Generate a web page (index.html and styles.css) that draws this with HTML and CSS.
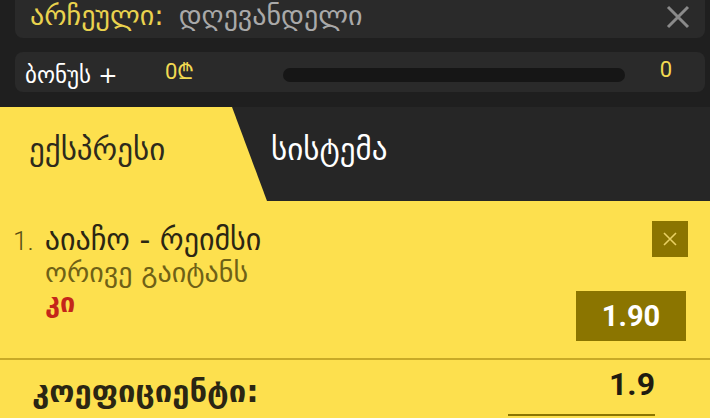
FILE: index.html
```html
<!DOCTYPE html>
<html>
<head>
<meta charset="utf-8">
<link rel="stylesheet" href="styles.css">
</head>
<body>
<div class="top">
  <div class="bar bar-sel">
    <span class="sel-label">არჩეული:</span>
    <span class="sel-value">დღევანდელი</span>
    <svg class="close" width="24" height="24" viewBox="0 0 24 24"><path d="M2 2 L22 22 M22 2 L2 22" stroke="#8a8a8a" stroke-width="3" fill="none"/></svg>
  </div>
  <div class="bar bar-bonus">
    <span class="bonus-label">ბონუს +</span>
    <span class="bonus-amt">0₾</span>
    <div class="progress"></div>
    <span class="bonus-count">0</span>
  </div>
</div>
<div class="tabs">
  <div class="tab tab-active"><span>ექსპრესი</span></div>
  <div class="tab tab-other"><span>სისტემა</span></div>
</div>
<div class="slip">
  <div class="item">
    <div class="item-info">
      <div class="item-title"><span class="num">1.</span><span>აიაჩო - რეიმსი</span></div>
      <div class="item-market">ორივე გაიტანს</div>
      <div class="item-pick">კი</div>
    </div>
    <div class="item-side">
      <div class="remove"><svg width="14" height="14" viewBox="0 0 14 14"><path d="M1 1 L13 13 M13 1 L1 13" stroke="#e8d063" stroke-width="1.6" fill="none"/></svg></div>
      <div class="odds">1.90</div>
    </div>
  </div>
  <div class="total">
    <div class="total-label">კოეფიციენტი:</div>
    <div class="total-right">
      <div class="total-value">1.9</div>
      <div class="stake-box"></div>
    </div>
  </div>
</div>
</body>
</html>
```

FILE: styles.css
```css
html, body {
  margin: 0;
  padding: 0;
}
body {
  width: 710px;
  height: 418px;
  overflow: hidden;
  background: #1f1f1f;
  font-family: "DejaVu Sans", sans-serif;
}
.top {
  padding: 0 5px 0 15px;
}
.bar {
  background: #2a2a2a;
  display: flex;
}
.bar-sel {
  height: 38px;
  border-radius: 0 0 8px 8px;
  padding: 0 15px;
  box-sizing: border-box;
  align-items: flex-start;
}
.sel-label {
  color: #e9d24e;
  font-size: 28px;
  line-height: 31px;
}
.sel-value {
  color: #a9a9a9;
  font-size: 28px;
  line-height: 31px;
  margin-left: 15px;
}
.close {
  margin-left: auto;
  margin-top: 5px;
}
.bar-bonus {
  margin-top: 14px;
  height: 40px;
  border-radius: 8px;
  padding: 0 33px 0 10px;
  align-items: center;
}
.bonus-label {
  color: #ffffff;
  font-size: 23px;
  width: 140px;
  margin-top: 6px;
}
.bonus-amt {
  color: #f2da52;
  font-family: "Roboto", sans-serif;
  font-size: 22px;
  width: 118px;
  margin-top: -5px;
}
.progress {
  width: 342px;
  height: 14px;
  border-radius: 7px;
  background: #161616;
  margin-top: 6px;
}
.bonus-count {
  color: #f2da52;
  font-family: "Roboto", sans-serif;
  font-size: 22px;
  margin-left: auto;
  margin-top: -5px;
}
.tabs {
  margin-top: 15px;
  height: 94px;
  background: #262626;
  display: flex;
}
.tab {
  padding-top: 24px;
  font-size: 31px;
  line-height: 36px;
  box-sizing: border-box;
}
.tab-active {
  width: 267px;
  background: #fde04e;
  clip-path: polygon(0 0, 232px 0, 267px 100%, 0 100%);
  color: #2d2a1c;
  padding-left: 29px;
}
.tab-other {
  color: #ffffff;
  padding-left: 4px;
}
.slip {
  background: #fde04e;
  height: 217px;
}
.item {
  display: flex;
  padding: 22px 22px 0 13px;
  height: 159px;
  box-sizing: border-box;
  border-bottom: 2px solid #c8aa26;
}
.item-info {
  flex: 1;
}
.item-title {
  font-size: 30px;
  line-height: 34px;
  color: #2b2613;
  display: flex;
  align-items: baseline;
  gap: 11px;
}
.num {
  font-family: "Roboto", sans-serif;
  font-weight: 300;
  color: #5a4f14;
  font-size: 26px;
}
.item-market {
  font-size: 28px;
  line-height: 30px;
  color: #6f6116;
  padding-left: 32px;
}
.item-pick {
  font-size: 27px;
  line-height: 30px;
  font-weight: bold;
  color: #c4261a;
  padding-left: 32px;
}
.item-side {
  display: flex;
  flex-direction: column;
  align-items: flex-end;
}
.remove {
  width: 36px;
  height: 36px;
  background: #8b7500;
  display: flex;
  align-items: center;
  justify-content: center;
  margin-top: -2px;
}
.odds {
  margin-top: 34px;
  margin-right: 2px;
  width: 110px;
  height: 50px;
  background: #8b7500;
  color: #ffffff;
  font-family: "Roboto", sans-serif;
  font-weight: bold;
  font-size: 29px;
  display: flex;
  align-items: center;
  justify-content: center;
}
.total {
  display: flex;
  justify-content: space-between;
  padding: 0 55px 0 32px;
}
.total-label {
  font-size: 31px;
  line-height: 36px;
  font-weight: bold;
  color: #2b2613;
  margin-top: 13px;
}
.total-right {
  display: flex;
  flex-direction: column;
  align-items: flex-end;
  width: 147px;
}
.total-value {
  font-family: "Roboto", sans-serif;
  font-weight: bold;
  font-size: 32px;
  line-height: 38px;
  color: #1f1c10;
  margin-top: 5px;
}
.stake-box {
  margin-top: 11px;
  width: 147px;
  height: 0;
  border-top: 2px solid #8b7500;
}
```
